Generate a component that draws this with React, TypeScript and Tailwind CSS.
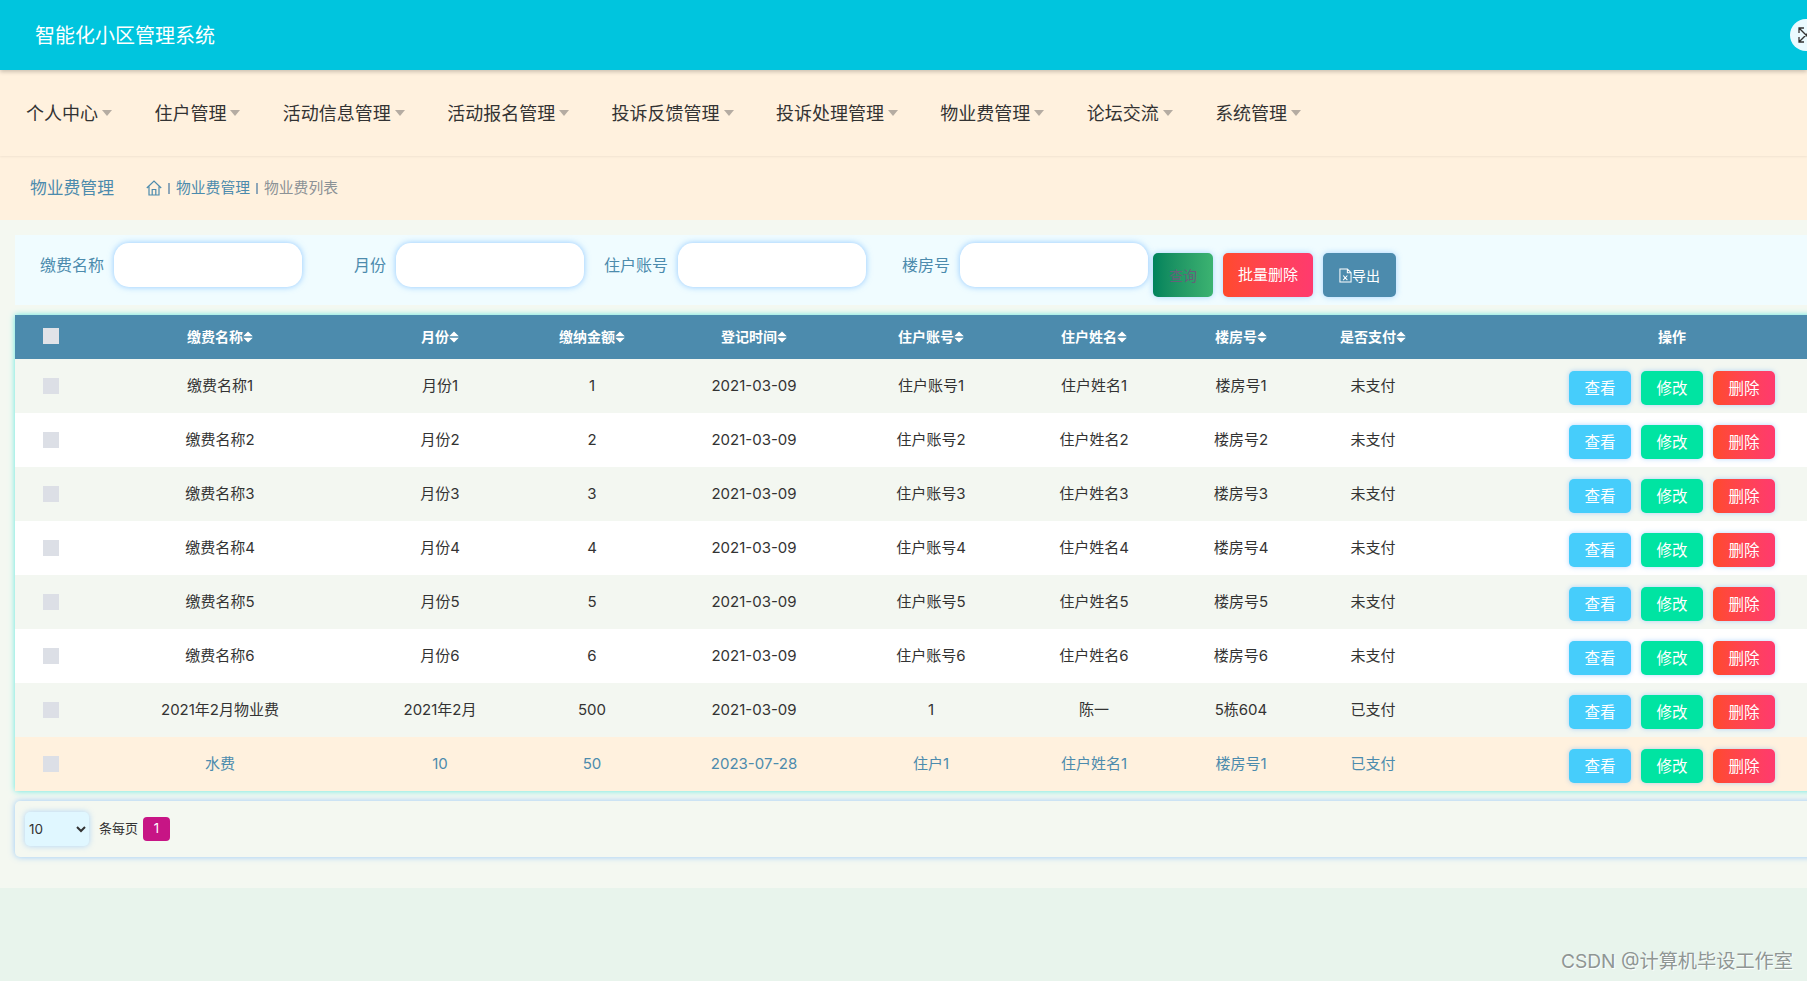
const menus = ['个人中心', '住户管理', '活动信息管理', '活动报名管理', '投诉反馈管理', '投诉处理管理', '物业费管理', '论坛交流', '系统管理']

const columns = [
  { label: '缴费名称', width: 'w-[266px]' },
  { label: '月份', width: 'w-[174px]' },
  { label: '缴纳金额', width: 'w-[130px]' },
  { label: '登记时间', width: 'w-[194px]' },
  { label: '住户账号', width: 'w-[160px]' },
  { label: '住户姓名', width: 'w-[166px]' },
  { label: '楼房号', width: 'w-[128px]' },
  { label: '是否支付', width: 'w-[136px]' },
]

const rows = [
  ['缴费名称1', '月份1', '1', '2021-03-09', '住户账号1', '住户姓名1', '楼房号1', '未支付'],
  ['缴费名称2', '月份2', '2', '2021-03-09', '住户账号2', '住户姓名2', '楼房号2', '未支付'],
  ['缴费名称3', '月份3', '3', '2021-03-09', '住户账号3', '住户姓名3', '楼房号3', '未支付'],
  ['缴费名称4', '月份4', '4', '2021-03-09', '住户账号4', '住户姓名4', '楼房号4', '未支付'],
  ['缴费名称5', '月份5', '5', '2021-03-09', '住户账号5', '住户姓名5', '楼房号5', '未支付'],
  ['缴费名称6', '月份6', '6', '2021-03-09', '住户账号6', '住户姓名6', '楼房号6', '未支付'],
  ['2021年2月物业费', '2021年2月', '500', '2021-03-09', '1', '陈一', '5栋604', '已支付'],
  ['水费', '10', '50', '2023-07-28', '住户1', '住户姓名1', '楼房号1', '已支付'],
]

const filters = ['缴费名称', '月份', '住户账号', '楼房号']

function SortIcon() {
  return (
    <svg viewBox="0 0 10 12" className="inline-block h-[12px] w-[10px] align-[-1px]" fill="currentColor" aria-hidden="true">
      <path d="M5 0.5L9.8 5.2H0.2ZM0.2 6.8H9.8L5 11.5Z" />
    </svg>
  )
}

function Checkbox({ light }: { light?: boolean }) {
  return <span className={`block h-4 w-4 ${light ? 'bg-[#e1e3e8]' : 'bg-[#dcdfe6]'}`} />
}

export default function App() {
  return (
    <div className="flex h-[981px] flex-col overflow-hidden bg-[#e8f4ec] font-['Inter','Noto_Sans_CJK_SC',sans-serif] text-[#333]">
      {/* Top bar */}
      <header className="relative z-20 flex h-[70px] shrink-0 items-center justify-between bg-[#00c5de] pl-[35px] shadow-[0_2px_4px_rgba(0,0,0,0.2)]">
        <span className="pt-[2px] text-[20px] text-white">智能化小区管理系统</span>
        <span className="-mr-[15px] flex h-8 w-8 items-center justify-center rounded-full bg-[#eafaff] text-[#333]">
          <svg viewBox="0 0 16 16" className="h-4 w-4" fill="none" stroke="currentColor" strokeWidth="1.3" aria-hidden="true">
            <path d="M1 1L15 15M15 1L1 15M1 6V1H6M10 1H15V6M1 10V15H6M15 10V15H10" />
          </svg>
        </span>
      </header>

      {/* Menu */}
      <nav className="relative z-10 flex h-[86px] shrink-0 items-center bg-[#fff1de] pl-[26px] shadow-[0_1px_2px_rgba(0,0,0,0.06)]">
        {menus.map((menu) => (
          <a key={menu} href="#" className="mr-[42.4px] flex items-center text-[18px] text-[#333]">
            {menu}
            <span className="ml-[4px] h-0 w-0 border-x-[5.5px] border-t-[6px] border-x-transparent border-t-[#b5aca2]" />
          </a>
        ))}
      </nav>

      {/* Breadcrumb */}
      <div className="flex h-[64px] shrink-0 items-center bg-[#fff1de] pl-[30px] text-[#4c8bad]">
        <span className="w-[116px] pt-[1px] text-[16.8px]">物业费管理</span>
        <svg viewBox="0 0 16 16" className="h-4 w-4" fill="none" stroke="currentColor" strokeWidth="1.2" aria-hidden="true">
          <path d="M0.8 8L8 1L15.2 8M3 6.5V15H13V6.5M6.2 15V9.5H9.8V15" />
        </svg>
        <span className="mx-[6px] h-[11px] w-[2px] bg-[#8ea6b8]" />
        <span className="text-[14.8px]">物业费管理</span>
        <span className="mx-[6px] h-[11px] w-[2px] bg-[#8ea6b8]" />
        <span className="text-[14.8px] text-[#8c9296]">物业费列表</span>
      </div>

      {/* Content */}
      <main className="h-[668px] shrink-0 bg-[#f4f8f1] pt-[15px] pl-[15px]">
        <form className="flex h-[70px] w-[1888px] items-start bg-[#f0fcff] pt-2 pl-[5px]">
          {filters.map((filter) => (
            <label key={filter} className="flex items-center text-[16px] text-[#4c8bad]">
              <span className="mr-[10px] w-[84px] text-right">{filter}</span>
              <input className="h-[44px] w-[188px] rounded-[15px] bg-white shadow-[0_0_6px_rgba(64,158,255,0.55)] outline-none" />
            </label>
          ))}
          <div className="mt-[10px] ml-[5px] flex gap-[10px] text-[14px]">
            <button type="button" className="h-[44px] w-[60px] rounded-[5px] bg-gradient-to-r from-[#00835c] to-[#3cb371] text-[#66607a] shadow-[0_0_6px_rgba(64,158,255,0.4)]">
              查询
            </button>
            <button type="button" className="h-[44px] w-[90px] rounded-[5px] bg-gradient-to-r from-[#ff4a2b] to-[#ff3a6e] text-[15px] text-white shadow-[0_0_6px_rgba(64,158,255,0.4)]">
              批量删除
            </button>
            <button type="button" className="flex h-[44px] w-[73px] items-center justify-center rounded-[5px] bg-[#4c8bad] text-white shadow-[0_0_6px_rgba(64,158,255,0.4)]">
              <svg viewBox="0 0 14 16" className="h-[15px] w-[13px]" fill="none" stroke="currentColor" strokeWidth="1.1" aria-hidden="true">
                <path d="M1 1H9L13 5V15H1ZM9 1V5H13M4.5 8L9 13M9 8L4.5 13" />
              </svg>
              导出
            </button>
          </div>
        </form>

        <table className="mt-[10px] w-[1888px] table-fixed text-center text-[15px] shadow-[0_0_6px_#5fe8df]">
          <thead>
            <tr className="h-[44px] bg-[#4c8bad] text-[14px] text-white">
              <th className="w-[72px] pb-[2px]">
                <span className="flex justify-center">
                  <Checkbox light />
                </span>
              </th>
              {columns.map((col) => (
                <th key={col.label} className={`${col.width} pb-[2px]`}>
                  {col.label}
                  <SortIcon />
                </th>
              ))}
              <th className="w-[462px] pb-[2px]">操作</th>
            </tr>
          </thead>
          <tbody>
            {rows.map((row, i) => (
              <tr
                key={i}
                className={`h-[54px] ${i === 7 ? 'bg-[#fff1de] text-[#4c8bad]' : i % 2 === 0 ? 'bg-[#f3f7f1]' : 'bg-white'}`}
              >
                <td>
                  <span className="flex justify-center">
                    <Checkbox />
                  </span>
                </td>
                {row.map((cell, j) => (
                  <td key={j}>{cell}</td>
                ))}
                <td>
                  <div className="mt-1 flex justify-center gap-[10px] text-[15.5px] text-white">
                    <button type="button" className="h-[34px] w-[62px] rounded-[5px] bg-[#46cdfb] pt-[1px] shadow-[0_0_5px_rgba(64,158,255,0.4)]">
                      查看
                    </button>
                    <button type="button" className="h-[34px] w-[62px] rounded-[5px] bg-[#00e4a2] pt-[1px] shadow-[0_0_5px_rgba(64,158,255,0.4)]">
                      修改
                    </button>
                    <button type="button" className="h-[34px] w-[62px] rounded-[5px] bg-gradient-to-r from-[#ff4a2b] to-[#ff3a6e] pt-[1px] shadow-[0_0_5px_rgba(64,158,255,0.4)]">
                      删除
                    </button>
                  </div>
                </td>
              </tr>
            ))}
          </tbody>
        </table>

        <div className="mt-[10px] flex h-[56px] w-[1888px] items-center rounded-[5px] bg-[#f4f8f1] pb-[1px] pl-[10px] text-[13px] shadow-[0_0_6px_rgba(64,158,255,0.5)]">
          <select className="h-[34px] w-[64px] rounded-[5px] bg-[#e0f7ff] text-[13.5px] shadow-[0_0_6px_rgba(64,158,255,0.4)] outline-none">
            <option>10</option>
            <option>20</option>
            <option>50</option>
          </select>
          <span className="ml-[10px]">条每页</span>
          <span className="ml-[5px] flex h-6 w-[27px] items-center justify-center rounded-[4px] bg-[#c71585] text-white">1</span>
        </div>
      </main>

      <div className="flex flex-1 items-end justify-end pr-[14px] pb-[5px]">
        <span className="text-[19.2px] text-[#8f9694] [text-shadow:1px_1px_1px_#fff]">CSDN @计算机毕设工作室</span>
      </div>
    </div>
  )
}
